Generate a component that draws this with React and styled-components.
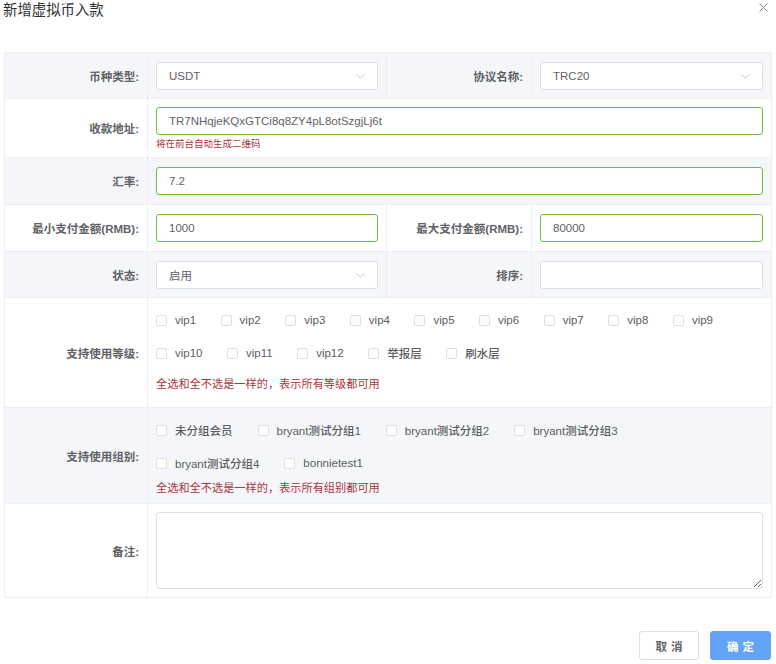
import React from "react";
import styled, { createGlobalStyle } from "styled-components";

const GlobalStyle = createGlobalStyle`
  body {
    margin: 0;
    background: #fff;
    font-family: "Liberation Sans", "Noto Sans CJK SC", sans-serif;
  }
  * {
    box-sizing: border-box;
  }
`;

const Dialog = styled.div`
  width: 776px;
  height: 664px;
  background: #fff;
`;

const Header = styled.div`
  display: flex;
  justify-content: space-between;
  align-items: flex-start;
  height: 52px;
  padding: 0 8px 0 3px;
`;

const Title = styled.span`
  font-size: 14.4px;
  line-height: 20px;
  color: #303133;
`;

const CloseButton = styled.button`
  display: flex;
  margin-top: 3px;
  padding: 0;
  border: none;
  background: none;
  cursor: pointer;
`;

const FormTable = styled.table`
  width: 767px;
  margin-left: 4px;
  border-collapse: collapse;
  table-layout: fixed;
  border: 1px solid #ebeef5;
`;

const Row = styled.tr`
  background: ${(p) => (p.$striped ? "#f5f6fa" : "#fff")};
`;

const LabelCell = styled.td`
  border: 1px solid #ebeef5;
  padding: 0 8px 0 0;
  text-align: right;
  vertical-align: middle;
  font-size: 11.5px;
  font-weight: 700;
  color: #606266;
  white-space: nowrap;
`;

const ValueCell = styled.td`
  border: 1px solid #ebeef5;
  padding: ${(p) => p.$pad || "9px 8px 8px"};
  vertical-align: top;
`;

const Field = styled.div`
  display: flex;
  align-items: center;
  height: 28px;
  padding: 0 12px;
  border: 1px solid ${(p) => (p.$valid ? "#67c23a" : "#dcdfe6")};
  border-radius: 3px;
  background: #fff;
  font-size: 11.5px;
  color: #606266;
`;

const FieldText = styled.span`
  flex: 1;
  white-space: nowrap;
`;

const Hint = styled.div`
  margin-top: ${(p) => p.$mt || 0}px;
  font-size: ${(p) => p.$size || 11.2}px;
  line-height: 14px;
  color: #a8373a;
  white-space: nowrap;
`;

const CheckGroup = styled.div`
  display: flex;
  flex-direction: column;
  gap: 13px;
`;

const CheckLine = styled.div`
  display: flex;
`;

const CheckItem = styled.label`
  display: flex;
  align-items: center;
  height: 20px;
  margin-right: ${(p) => p.$space}px;
  font-size: 11.5px;
  font-weight: 500;
  color: #5a5c61;
  white-space: nowrap;
  cursor: pointer;
`;

const CheckBox = styled.span`
  width: 11px;
  height: 11px;
  margin-right: 8px;
  border: 1px solid #dcdfe6;
  border-radius: 2px;
  background: #fff;
`;

const TextArea = styled.textarea`
  display: block;
  width: 100%;
  height: 77px;
  padding: 6px 12px;
  border: 1px solid #dcdfe6;
  border-radius: 3px;
  resize: vertical;
  font-family: inherit;
  font-size: 11.5px;
  color: #606266;
  outline: none;
`;

const Footer = styled.div`
  display: flex;
  justify-content: flex-end;
  gap: 11px;
  margin-top: 33px;
  padding-right: 5px;
`;

const Button = styled.button`
  width: ${(p) => p.$w}px;
  height: 29px;
  padding: 0;
  border: 1px solid ${(p) => (p.$primary ? "#63a4f8" : "#dcdfe6")};
  border-radius: 3px;
  background: ${(p) => (p.$primary ? "#63a4f8" : "#fff")};
  color: ${(p) => (p.$primary ? "#fff" : "#606266")};
  font-family: inherit;
  font-size: 11.5px;
  font-weight: 700;
  letter-spacing: 4px;
  text-indent: 4px;
  cursor: pointer;
`;

const Chevron = () => (
  <svg width="9" height="5" viewBox="0 0 9 5">
    <polyline points="0.5,0.5 4.5,4 8.5,0.5" fill="none" stroke="#c0c4cc" strokeWidth="1" />
  </svg>
);

const CloseIcon = () => (
  <svg width="9" height="9" viewBox="0 0 9 9">
    <path d="M0.5 0.5 L8.5 8.5 M8.5 0.5 L0.5 8.5" stroke="#909399" strokeWidth="1" />
  </svg>
);

function Select({ value }) {
  return (
    <Field>
      <FieldText>{value}</FieldText>
      <Chevron />
    </Field>
  );
}

function Input({ value, valid }) {
  return (
    <Field $valid={valid}>
      <FieldText>{value}</FieldText>
    </Field>
  );
}

function Checks({ lines, space }) {
  return (
    <CheckGroup>
      {lines.map((line, i) => (
        <CheckLine key={i}>
          {line.map((item) => (
            <CheckItem key={item} $space={space}>
              <CheckBox />
              {item}
            </CheckItem>
          ))}
        </CheckLine>
      ))}
    </CheckGroup>
  );
}

const levels = [
  ["vip1", "vip2", "vip3", "vip4", "vip5", "vip6", "vip7", "vip8", "vip9"],
  ["vip10", "vip11", "vip12", "举报层", "刷水层"],
];
const groups = [
  ["未分组会员", "bryant测试分组1", "bryant测试分组2", "bryant测试分组3"],
  ["bryant测试分组4", "bonnietest1"],
];

export default function App() {
  return (
    <Dialog>
      <GlobalStyle />
      <Header>
        <Title>新增虚拟币入款</Title>
        <CloseButton>
          <CloseIcon />
        </CloseButton>
      </Header>

      <FormTable>
        <colgroup>
          <col style={{ width: 143 }} />
          <col style={{ width: 239 }} />
          <col style={{ width: 145 }} />
          <col style={{ width: 240 }} />
        </colgroup>
        <tbody>
          <Row $striped>
            <LabelCell>币种类型:</LabelCell>
            <ValueCell>
              <Select value="USDT" />
            </ValueCell>
            <LabelCell>协议名称:</LabelCell>
            <ValueCell>
              <Select value="TRC20" />
            </ValueCell>
          </Row>
          <Row>
            <LabelCell>收款地址:</LabelCell>
            <ValueCell colSpan={3} $pad="8px 8px 6px">
              <Input value="TR7NHqjeKQxGTCi8q8ZY4pL8otSzgjLj6t" valid />
              <Hint $mt={2} $size={9.5}>将在前台自动生成二维码</Hint>
            </ValueCell>
          </Row>
          <Row $striped>
            <LabelCell>汇率:</LabelCell>
            <ValueCell colSpan={3} $pad="9px 8px">
              <Input value="7.2" valid />
            </ValueCell>
          </Row>
          <Row>
            <LabelCell>最小支付金额(RMB):</LabelCell>
            <ValueCell $pad="9px 8px">
              <Input value="1000" valid />
            </ValueCell>
            <LabelCell>最大支付金额(RMB):</LabelCell>
            <ValueCell $pad="9px 8px">
              <Input value="80000" valid />
            </ValueCell>
          </Row>
          <Row $striped>
            <LabelCell>状态:</LabelCell>
            <ValueCell>
              <Select value="启用" />
            </ValueCell>
            <LabelCell>排序:</LabelCell>
            <ValueCell>
              <Input value="" />
            </ValueCell>
          </Row>
          <Row>
            <LabelCell>支持使用等级:</LabelCell>
            <ValueCell colSpan={3} $pad="12px 8px 16px">
              <Checks lines={levels} space={24.5} />
              <Hint $mt={14}>全选和全不选是一样的，表示所有等级都可用</Hint>
            </ValueCell>
          </Row>
          <Row $striped>
            <LabelCell>支持使用组别:</LabelCell>
            <ValueCell colSpan={3} $pad="12px 8px 8px">
              <Checks lines={groups} space={25} />
              <Hint $mt={8}>全选和全不选是一样的，表示所有组别都可用</Hint>
            </ValueCell>
          </Row>
          <Row>
            <LabelCell>备注:</LabelCell>
            <ValueCell colSpan={3} $pad="8px 8px 8px">
              <TextArea />
            </ValueCell>
          </Row>
        </tbody>
      </FormTable>

      <Footer>
        <Button $w={60}>取消</Button>
        <Button $w={61} $primary>确定</Button>
      </Footer>
    </Dialog>
  );
}
